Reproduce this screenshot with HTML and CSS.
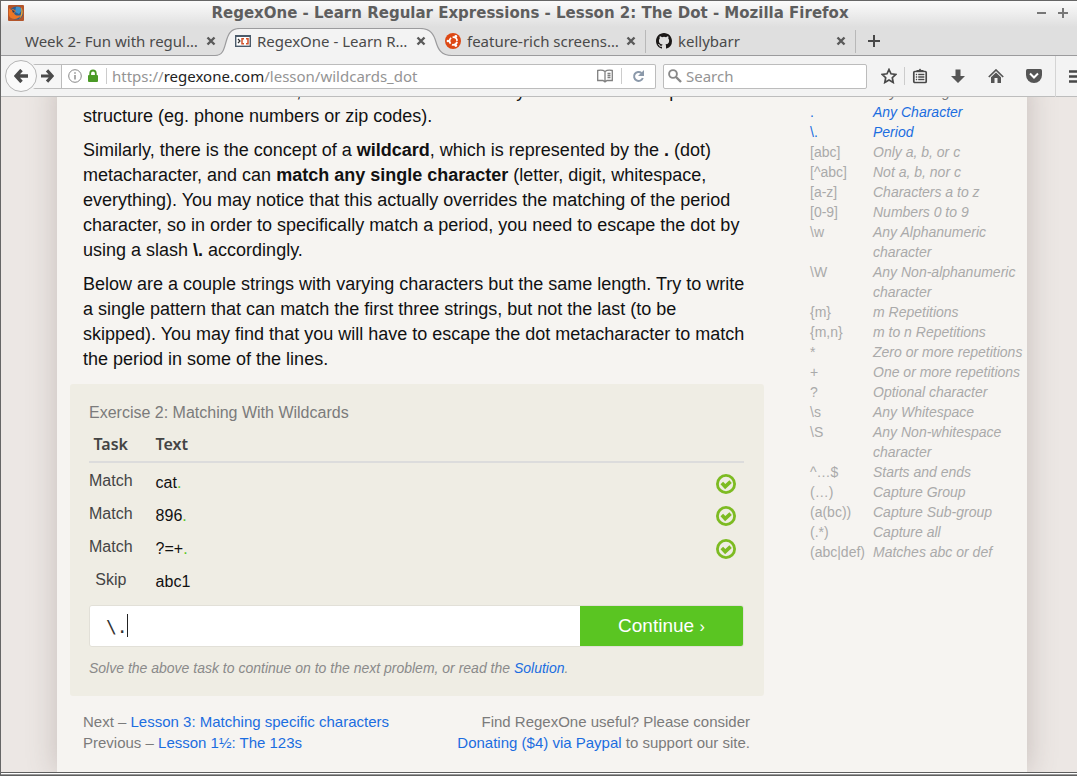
FILE: index.html
```html
<!DOCTYPE html>
<html lang="en">
<head>
<meta charset="utf-8">
<title>RegexOne - Learn Regular Expressions - Lesson 2: The Dot</title>
<link rel="stylesheet" href="styles.css">
</head>
<body>
<svg class="defs" width="0" height="0" aria-hidden="true">
  <symbol id="close" viewBox="0 0 10 10"><path d="M1.500 1.500l7 7M8.500 1.500l-7 7" stroke="#5a5a5a" stroke-width="2.400"/></symbol>
  <symbol id="check" viewBox="0 0 20 20"><circle cx="10" cy="10" r="8.6" fill="none" stroke="#7dbb22" stroke-width="2.8"/><path d="M5.800 9l3.400 3.600 5.400-5" fill="none" stroke="#7dbb22" stroke-width="3.6"/></symbol>
</svg>
<div class="window">
  <header class="titlebar">
    <svg class="app-icon" width="16" height="16" viewBox="0 0 16 16"><rect width="16" height="16" rx="1" fill="#b3552b"/><circle cx="8.5" cy="8" r="6.6" fill="#2c5f93"/><path d="M8 2c3-1 5 0 6 3l-3 4-4-2z" fill="#3f92cc"/><path d="M1 3l2 2 2-1c1 1 2 1 3 2l-2 2c1 3 4 3 7 2-2 4-7 5-10 3S1 8 1 3z" fill="#ee7625"/><path d="M13 2c3 4 2 9-2 12 2-3 3-8 2-12z" fill="#f7a32f"/><path d="M4 5l3 1-2 2z" fill="#193a63"/></svg>
    <h1 class="window-title">RegexOne - Learn Regular Expressions - Lesson 2: The Dot - Mozilla Firefox</h1>
    <div class="window-buttons">
      <button type="button" aria-label="Minimize"><svg width="10" height="12" viewBox="0 0 10 12"><path d="M1 6h9" stroke="#777" stroke-width="2"/></svg></button>
      <button type="button" aria-label="Maximize"><svg width="10" height="12" viewBox="0 0 10 12"><path d="M0 6h10M5 1v10" stroke="#777" stroke-width="2"/></svg></button>
    </div>
  </header>

  <nav class="tabs" aria-label="Tabs">
    <div class="tab"><span class="tab-label">Week 2- Fun with regul…</span><button type="button" aria-label="Close tab"><svg width="10" height="10"><use href="#close"/></svg></button></div>
    <div class="tab tab-active">
      <svg class="tab-shape" width="244" height="29" viewBox="0 0 244 29"><path d="M0 27.5H7C15 27.5 16 21 18 14S22 .5 32 .5H212C223 .5 226 7 228 14S233 27.5 244 27.5V29H0z" fill="#f3f3f3"/><path d="M0 27.5H7C15 27.5 16 21 18 14S22 .5 32 .5H212C223 .5 226 7 228 14S233 27.5 244 27.5" fill="none" stroke="#9b9b9d" stroke-width="1.2"/></svg>
      <svg class="tab-icon" width="16" height="16" viewBox="0 0 16 16"><rect x=".7" y="2.7" width="14.6" height="10.6" fill="#fff" stroke="#4a5a6a" stroke-width="1.4"/><path d="M0 3h16" stroke="#4a5a6a" stroke-width="2"/><path d="M3 6l2 2-2 2" fill="none" stroke="#333" stroke-width="1.2"/><path d="M9 5.7H7v5h2M11 5.7h2v5h-2" fill="none" stroke="#d4522a" stroke-width="1.5"/></svg>
      <span class="tab-label">RegexOne - Learn R…</span><button type="button" aria-label="Close tab"><svg width="10" height="10"><use href="#close"/></svg></button>
    </div>
    <div class="tab">
      <svg class="tab-icon" width="16" height="16" viewBox="0 0 16 16"><circle cx="8" cy="8" r="8" fill="#dd4814"/><circle cx="8.3" cy="8" r="3.8" fill="none" stroke="#fff" stroke-width="1.8" stroke-dasharray="6.4 1.56" stroke-dashoffset="-.8"/><circle cx="2.9" cy="8" r="1.3" fill="#fff"/><circle cx="10.8" cy="3.4" r="1.4" fill="#fff"/><circle cx="10.8" cy="12.6" r="1.4" fill="#fff"/></svg>
      <span class="tab-label">feature-rich screens…</span><button type="button" aria-label="Close tab"><svg width="10" height="10"><use href="#close"/></svg></button>
    </div>
    <div class="tab tab-divided">
      <svg class="tab-icon" width="16" height="16" viewBox="0 0 16 16"><path fill="#1b1817" d="M8 0C3.58 0 0 3.58 0 8c0 3.54 2.29 6.53 5.47 7.59.4.07.55-.17.55-.38 0-.19-.01-.82-.01-1.49-2.01.37-2.53-.49-2.69-.94-.09-.23-.48-.94-.82-1.13-.28-.15-.68-.52-.01-.53.63-.01 1.08.58 1.23.82.72 1.21 1.87.87 2.33.66.07-.52.28-.87.51-1.07-1.78-.2-3.64-.89-3.64-3.95 0-.87.31-1.59.82-2.15-.08-.2-.36-1.02.08-2.12 0 0 .67-.21 2.2.82a7.6 7.6 0 014 0c1.53-1.04 2.2-.82 2.2-.82.44 1.1.16 1.92.08 2.12.51.56.82 1.27.82 2.15 0 3.07-1.87 3.75-3.65 3.95.29.25.54.73.54 1.48 0 1.07-.01 1.93-.01 2.2 0 .21.15.46.55.38A8 8 0 0016 8c0-4.42-3.58-8-8-8z"/></svg>
      <span class="tab-label">kellybarr</span><button type="button" aria-label="Close tab"><svg width="10" height="10"><use href="#close"/></svg></button>
    </div>
    <button class="new-tab tab-divided" type="button" aria-label="New tab"><svg width="12" height="12" viewBox="0 0 12 12"><path d="M0 6h12M6 0v12" stroke="#484848" stroke-width="2"/></svg></button>
  </nav>

  <div class="toolbar">
    <button class="back" type="button" aria-label="Back"><svg width="14" height="14" viewBox="0 0 14 14"><path d="M7.500 1L2 7l5.500 6M2.500 7H14" fill="none" stroke="#4a4a4a" stroke-width="3.400"/></svg></button>
    <div class="location">
      <button class="forward" type="button" aria-label="Forward"><svg width="13" height="14" viewBox="0 0 14 14"><path d="M6.500 1L12 7l-5.500 6M11.500 7H0" fill="none" stroke="#4a4a4a" stroke-width="3.400"/></svg></button>
      <svg width="14" height="14" viewBox="0 0 14 14"><circle cx="7" cy="7" r="6.300" fill="none" stroke="#888"/><path d="M7 6v4.500M7 3.200v1.600" stroke="#888" stroke-width="1.400"/></svg>
      <svg class="lock" width="10" height="14" viewBox="0 0 10 14"><path d="M2.200 7V4.500a2.800 3 0 015.600 0V7" fill="none" stroke="#4b9a26" stroke-width="1.800"/><rect y="6" width="10" height="7" rx="1" fill="#4b9a26"/></svg>
      <span class="rule"></span>
      <div class="address">https://<b>regexone.com</b>/lesson/wildcards_dot</div>
      <svg width="16" height="14" viewBox="0 0 16 14"><path d="M8 2.500C6 1 3 1 .7 1.500v10H6l2 1.500 2-1.500h5.300v-10C13 1 10 1 8 2.500zM8 3v9M10.500 4.500h3M10.500 6.500h3M10.500 8.500h3" fill="none" stroke="#808080" stroke-width="1.300"/></svg>
      <span class="rule rule-reload"></span>
      <button type="button" aria-label="Reload"><svg width="13" height="13" viewBox="0 0 13 13"><path d="M9.500 3A4.500 4.500 0 1010.800 8" fill="none" stroke="#8b99aa" stroke-width="2"/><path d="M12 0v6H6z" fill="#8b99aa"/></svg></button>
    </div>
    <label class="search"><svg width="14" height="14" viewBox="0 0 14 14"><circle cx="5" cy="5" r="3.900" fill="none" stroke="#888" stroke-width="1.900"/><path d="M8 8l5 5" stroke="#888" stroke-width="2.400"/></svg><input type="text" placeholder="Search" aria-label="Search"></label>
    <div class="tools">
      <button type="button" aria-label="Bookmark"><svg width="16" height="16" viewBox="0 0 16 16"><path d="M8 1.500l2 4.300 4.800.6-3.500 3.300.9 4.800L8 12.100l-4.200 2.400.9-4.800L1.200 6.400 6 5.800z" fill="none" stroke="#484848" stroke-width="1.700"/></svg></button>
      <button class="divided" type="button" aria-label="Reading list"><svg width="16" height="16" viewBox="0 0 16 16"><rect x="1.800" y="3.500" width="12.400" height="11" rx="1" fill="#fff" stroke="#484848" stroke-width="1.700"/><path d="M4.500 3.500V2h2.200L8 .5 9.300 2h2.200v1.500z" fill="#484848"/><path d="M3.800 6.500h1.400M6.200 6.500h6.200M3.800 9h1.400M6.200 9h6.200M3.800 11.500h1.400M6.200 11.500h6.200" fill="none" stroke="#484848" stroke-width="1.300"/></svg></button>
      <button type="button" aria-label="Downloads"><svg width="14" height="14" viewBox="0 0 14 14"><path d="M4.500 .5h5V7H14l-7 7-7-7h4.500z" fill="#555"/></svg></button>
      <button type="button" aria-label="Home"><svg width="16" height="14" viewBox="0 0 16 14"><path d="M.8 8L8 1l7.200 7" fill="none" stroke="#555" stroke-width="1.700"/><path d="M8 3.500l5 4.800V14h-3.500V9h-3v5H3V8.300z" fill="#555"/></svg></button>
      <button type="button" aria-label="Pocket"><svg width="16" height="14" viewBox="0 0 16 14"><path d="M1.500 0h13Q16 0 16 1.500V6A8 8 0 010 6V1.500Q0 0 1.500 0z" fill="#555"/><path d="M4 4.500l4 4 4-4" fill="none" stroke="#fff" stroke-width="2"/></svg></button>
    </div>
    <button class="menu" type="button" aria-label="Menu"><svg width="8" height="13" viewBox="0 0 8 13"><path d="M0 1.500h8M0 6.500h8M0 11.500h8" stroke="#484848" stroke-width="2.600"/></svg></button>
  </div>

  <div class="viewport">
    <div class="page">
      <main class="lesson">
        <div class="prose">
          <p>know the exact contents of, other than the fact that they share a common pattern or<br>structure (eg. phone numbers or zip codes).</p>
          <p>Similarly, there is the concept of a <strong>wildcard</strong>, which is represented by the <strong>.</strong> (dot)<br>metacharacter, and can <strong>match any single character</strong> (letter, digit, whitespace,<br>everything). You may notice that this actually overrides the matching of the period<br>character, so in order to specifically match a period, you need to escape the dot by<br>using a slash <strong>\.</strong> accordingly.</p>
          <p>Below are a couple strings with varying characters but the same length. Try to write<br>a single pattern that can match the first three strings, but not the last (to be<br>skipped). You may find that you will have to escape the dot metacharacter to match<br>the period in some of the lines.</p>
        </div>
        <section class="exercise">
          <h2>Exercise 2: Matching With Wildcards</h2>
          <table class="tasks">
            <thead><tr><th class="task">Task</th><th>Text</th><th class="status"></th></tr></thead>
            <tbody>
              <tr><td class="task">Match</td><td class="sample">cat<i>.</i></td><td class="status"><svg width="20" height="20"><use href="#check"/></svg></td></tr>
              <tr><td class="task">Match</td><td class="sample">896<i>.</i></td><td class="status"><svg width="20" height="20"><use href="#check"/></svg></td></tr>
              <tr><td class="task">Match</td><td class="sample">?=+<i>.</i></td><td class="status"><svg width="20" height="20"><use href="#check"/></svg></td></tr>
              <tr><td class="task">Skip</td><td class="sample">abc1</td><td class="status"></td></tr>
            </tbody>
          </table>
          <form class="answer">
            <div class="answer-field"><input type="text" value="\." aria-label="Pattern"><span class="caret"></span></div>
            <button type="button">Continue <small>›</small></button>
          </form>
          <p class="hint">Solve the above task to continue on to the next problem, or read the <a href="#solution">Solution</a>.</p>
        </section>
        <footer class="lesson-nav">
          <p>Next – <a href="#next">Lesson 3: Matching specific characters</a><br>Previous – <a href="#previous">Lesson 1½: The 123s</a></p>
          <p class="donate">Find RegexOne useful? Please consider<br><a href="#donate">Donating ($4) via Paypal</a> to support our site.</p>
        </footer>
      </main>
      <aside>
        <table class="notes">
          <tr class="seen"><td>\D</td><td>Any Non-digit character</td></tr>
          <tr class="current"><td>.</td><td>Any Character</td></tr>
          <tr class="current"><td>\.</td><td>Period</td></tr>
          <tr><td>[abc]</td><td>Only a, b, or c</td></tr>
          <tr><td>[^abc]</td><td>Not a, b, nor c</td></tr>
          <tr><td>[a-z]</td><td>Characters a to z</td></tr>
          <tr><td>[0-9]</td><td>Numbers 0 to 9</td></tr>
          <tr><td>\w</td><td>Any Alphanumeric<br>character</td></tr>
          <tr><td>\W</td><td>Any Non-alphanumeric<br>character</td></tr>
          <tr><td>{m}</td><td>m Repetitions</td></tr>
          <tr><td>{m,n}</td><td>m to n Repetitions</td></tr>
          <tr><td>*</td><td>Zero or more repetitions</td></tr>
          <tr><td>+</td><td>One or more repetitions</td></tr>
          <tr><td>?</td><td>Optional character</td></tr>
          <tr><td>\s</td><td>Any Whitespace</td></tr>
          <tr><td>\S</td><td>Any Non-whitespace<br>character</td></tr>
          <tr><td>^…$</td><td>Starts and ends</td></tr>
          <tr><td>(…)</td><td>Capture Group</td></tr>
          <tr><td>(a(bc))</td><td>Capture Sub-group</td></tr>
          <tr><td>(.*)</td><td>Capture all</td></tr>
          <tr><td>(abc|def)</td><td>Matches abc or def</td></tr>
        </table>
      </aside>
    </div>
  </div>
  <div class="frame-bottom"></div>
</div>
</body>
</html>
```
FILE: styles.css
```css
* { box-sizing: border-box; }
body { margin: 0; font-family: "Liberation Sans", Arial, sans-serif; }
h1, h2, p { margin: 0; }
button { margin: 0; padding: 0; border: 0; background: none; font: inherit; }
svg { display: block; flex: none; }
a { color: #1b6de0; text-decoration: none; }
.defs { position: absolute; }

.window { display: flex; flex-direction: column; height: 100vh; overflow: hidden; border: 1px solid #666; border-width: 1px 0 0 1px; background: #f3f3f3; }

.titlebar { display: flex; align-items: center; flex: none; height: 26px; padding: 0 9px 2px 7px; background: linear-gradient(#fbfbfb, #dfdfdf); }
.window-title { flex: 1; text-align: center; white-space: nowrap; color: #5e5e5e; font: bold 15px/22px "DejaVu Sans", sans-serif; }
.window-buttons { display: flex; gap: 12px; }

.tabs { display: flex; flex: none; height: 29px; padding-left: 14px; background: #dfdfdf; border-bottom: 1px solid #9b9b9d; font: 15px/28px "Noto Sans", "Open Sans", sans-serif; color: #4a4a4a; }
.tab { position: relative; display: flex; align-items: center; gap: 6px; width: 210px; padding: 0 9px 0 10px; }
.tab > * { position: relative; }
.tab-label { flex: 1; white-space: nowrap; }
.tab > .tab-shape { position: absolute; left: -17px; top: 1px; }
.tab-divided { border-left: 1px solid #b8b8b8; border-image: linear-gradient(transparent 15%, #b8b8b8 15%, #b8b8b8 90%, transparent 90%) 1; }
.new-tab { padding: 0 12px; }

.toolbar { display: flex; align-items: center; flex: none; height: 41px; padding-left: 4px; background: #f3f3f3; border-bottom: 1px solid #bdbdbd; font: 15px/22px "Noto Sans", "Open Sans", sans-serif; }
.back { position: relative; display: grid; place-items: center; width: 32px; height: 32px; border: 1px solid #b5b5b5; border-radius: 50%; background: #fafafa; }
.location { display: flex; align-items: center; flex: 1; height: 25px; margin-left: -4px; padding-right: 10px; border: 1px solid #bcbcbc; border-left: 0; border-radius: 2px; background: #fff; }
.forward { display: grid; place-items: center; align-self: stretch; width: 29px; margin-right: 6px; border-right: 1px solid #bcbcbc; background: #f6f6f6; }
.lock { margin-left: 6px; }
.rule { width: 1px; height: 16px; margin: 0 5px 0 8px; background: #ccc; }
.rule-reload { margin: 0 10px 0 8px; }
.address { flex: 1; color: #949494; white-space: nowrap; }
.address b { font-weight: 400; color: #222; }
.search { display: flex; align-items: center; gap: 4px; width: 204px; height: 25px; margin-left: 7px; padding-left: 4px; border: 1px solid #bcbcbc; border-radius: 2px; background: #fff; }
.search input { flex: 1; min-width: 0; padding: 0; border: 0; outline: 0; background: none; font: inherit; }
.search input::placeholder { color: #949494; }
.tools { display: flex; margin-left: 14px; }
.tools button { display: grid; place-items: center; width: 38px; height: 18px; }
.tools button:first-child { width: 16px; margin-right: 7px; }
.tools .divided { width: 31px; margin-right: 4px; border-left: 1px solid #ccc; }
.menu { margin-left: 2px; padding: 14px 0 14px 13px; border-left: 1px solid #d4d4d4; }

.viewport { display: flex; flex: 1; min-height: 0; overflow: hidden; background: #ece7e4; }
.page { display: grid; flex: 1; grid-template-columns: minmax(0, 1fr) 217px; gap: 46px; margin: -18px 50px 0 56px; padding-left: 13px; background: #f6f4f1; box-shadow: 0 0 28px rgba(110, 90, 85, .3); }

.prose { padding-left: 13px; font-size: 18px; line-height: 25px; color: #111; white-space: nowrap; }
.prose p + p { margin-top: 9px; }

.exercise { margin-top: 12px; padding: 17px 20px 17px 19px; border-radius: 3px; background: #efede4; }
.exercise h2 { font-size: 16px; line-height: 24px; font-weight: 400; color: #7b7b7b; }
.tasks { width: 100%; border-collapse: collapse; font-size: 16px; line-height: 20px; color: #444; }
.tasks th { height: 37px; padding: 2px 0 0; border-bottom: 2px solid #dcdcdc; text-align: left; font: 600 16px/24px "Noto Sans", "Open Sans", sans-serif; }
.tasks td { height: 33px; padding: 4px 0 0; vertical-align: middle; }
.tasks .task { width: 43px; text-align: center; }
.tasks th + th, .tasks .sample { padding-left: 23px; }
.tasks .sample { padding-top: 8px; color: #111; }
.tasks i { font-style: normal; color: #5ac522; }
.tasks .status { width: 31px; padding: 9px 0 0 3px; }

.answer { display: flex; height: 42px; margin-top: 11px; border: 1px solid #e2e0d8; border-radius: 3px; overflow: hidden; }
.answer-field { position: relative; flex: 3; }
.answer-field input { width: 100%; height: 100%; padding: 0 16px; border: 0; outline: 0; background: #fff; color: #333; font: 18px "DejaVu Sans Mono", monospace; }
.caret { position: absolute; left: 37px; top: 8px; width: 1px; height: 23px; background: #222; }
.answer button { flex: 1; background: #5ac522; color: #fff; font-size: 19px; }
.answer small { font-size: 16px; }
.hint { margin-top: 11px; font-size: 14px; line-height: 21px; font-style: italic; color: #8a8a8a; }

.lesson-nav { display: flex; justify-content: space-between; padding: 15px 14px 28px 13px; font-size: 15px; line-height: 21px; color: #7b7b7b; }
.donate { text-align: right; }

.notes { border-collapse: collapse; font-size: 14px; line-height: 20px; color: #aaa; white-space: nowrap; }
.notes td { padding: 0; vertical-align: top; }
.notes td:first-child { width: 63px; }
.notes td + td { font-style: italic; }
.notes .seen { color: #777; }
.notes .current { color: #1b6de0; }
aside { padding-top: 3px; }

.frame-bottom { flex: none; height: 4px; background: linear-gradient(#5f5f5f 1px, #fff 1px, #fff 2px, #999 2px, #999 3px, #5f5f5f 3px); }
```
